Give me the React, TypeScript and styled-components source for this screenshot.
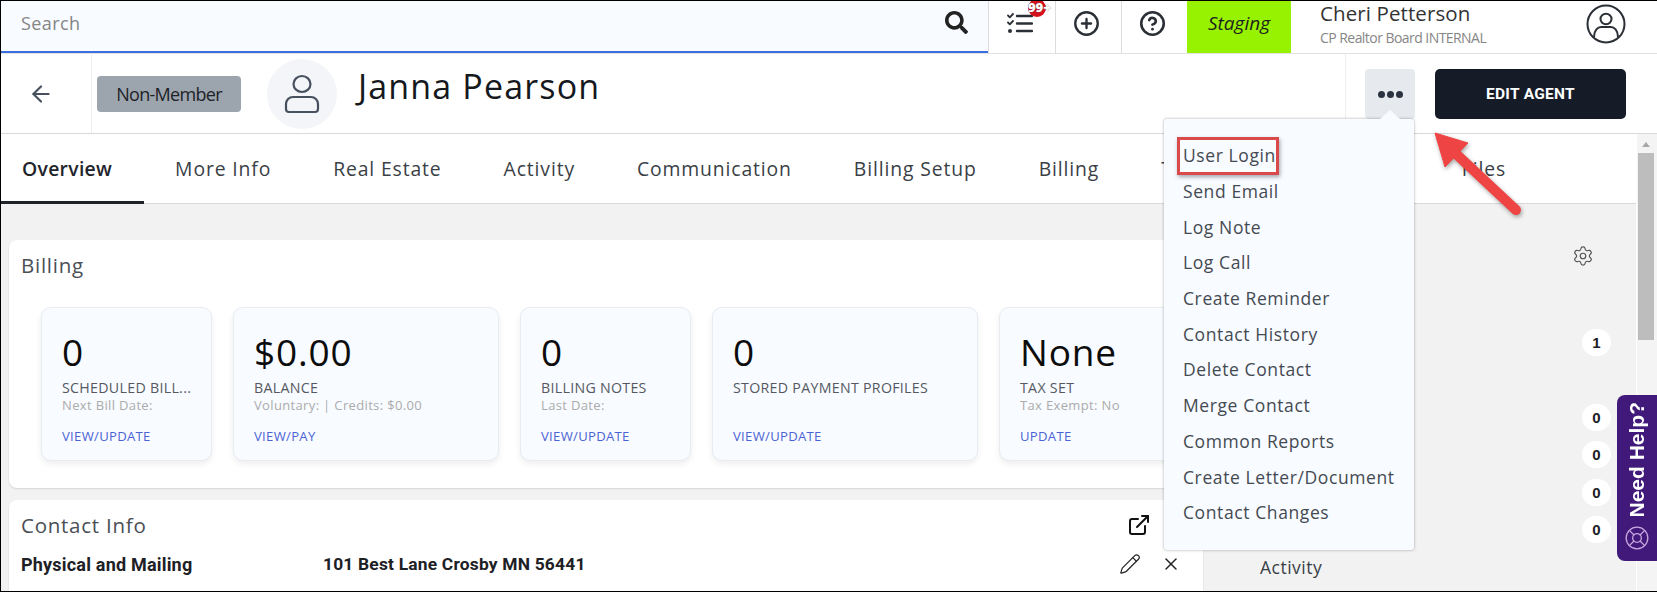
import React from 'react';
import styled, { createGlobalStyle } from 'styled-components';
import { ArrowLeft, CirclePlus, CircleHelp, ExternalLink, Pencil, X, Settings, LifeBuoy } from 'lucide-react';
import { FaSearch } from 'react-icons/fa';

const Global = createGlobalStyle`
  html, body { margin: 0; padding: 0; background: #fff; }
  * { box-sizing: border-box; }
  body { font-family: "Open Sans", "Liberation Sans", sans-serif; }
`;

const Frame = styled.div`
  position: relative;
  width: 1657px;
  height: 592px;
  overflow: hidden;
  border: 1px solid #000;
  border-right: 0;
  display: flex;
  flex-direction: column;
  background: #fff;
`;

const TopBar = styled.div`
  display: flex;
  height: 53px;
  flex: none;
  border-bottom: 1px solid #e2e2e2;
`;

const SearchBox = styled.div`
  width: 987px;
  height: 52px;
  flex: none;
  background: #f8fbff;
  border-bottom: 2px solid #3b6fdf;
  display: flex;
  align-items: center;
  justify-content: space-between;
  padding: 0 20px 7px 20px;
  color: #222;
`;

const SearchHint = styled.span`
  font-size: 18px;
  letter-spacing: 0.4px;
  color: #858585;
`;

const IconCell = styled.div<{ $w?: number }>`
  position: relative;
  width: ${p => p.$w ?? 66}px;
  flex: none;
  display: flex;
  align-items: center;
  justify-content: center;
  padding: 0 4px 7px 0;
  border-left: 1px solid #dcdcdc;
  color: #2b2f36;
`;

const Badge99 = styled.span`
  position: absolute;
  top: -2px;
  left: 39px;
  width: 18px;
  height: 18px;
  border-radius: 50%;
  background: #d4121e;
  color: #fff;
  font-size: 13px;
  font-weight: 800;
  line-height: 16px;
  white-space: nowrap;
  text-shadow: 0 0 1px #555;
`;

const Env = styled.div`
  width: 104px;
  flex: none;
  background: #96f200;
  display: flex;
  align-items: center;
  justify-content: center;
  padding-bottom: 8px;
  font-size: 19px;
  font-style: italic;
  color: #1f1f1f;
`;

const UserBlock = styled.div`
  flex: 1;
  display: flex;
  align-items: center;
  justify-content: space-between;
  padding: 0 31px 7px 29px;
`;

const UserText = styled.div`
  padding-top: 2px;
`;

const UserName = styled.div`
  font-size: 20.5px;
  font-weight: 500;
  line-height: 20px;
  letter-spacing: 0.1px;
  color: #333;
`;

const UserOrg = styled.div`
  font-size: 14px;
  line-height: 18px;
  margin-top: 6px;
  letter-spacing: -0.55px;
  color: #868686;
`;

const Header = styled.div`
  display: flex;
  align-items: stretch;
  height: 80px;
  flex: none;
  border-bottom: 1px solid #d9d9d9;
`;

const BackCell = styled.div`
  width: 91px;
  flex: none;
  display: flex;
  align-items: center;
  justify-content: center;
  padding-right: 11px;
  border-right: 1px solid #eee;
  color: #47505f;
`;

const Pill = styled.div`
  width: 144px;
  height: 36px;
  margin: 22px 0 0 5px;
  border-radius: 4px;
  background: #9ca5ad;
  display: flex;
  align-items: center;
  justify-content: center;
  font-size: 18px;
  letter-spacing: -0.7px;
  color: #1e2228;
`;

const AvatarCircle = styled.div`
  width: 70px;
  height: 70px;
  margin: 5px 0 0 26px;
  border-radius: 50%;
  background: #f3f5f8;
  display: flex;
  align-items: center;
  justify-content: center;
`;

const Name = styled.h1`
  margin: 9px 0 0 21px;
  font-size: 34px;
  font-weight: 400;
  line-height: 46px;
  letter-spacing: 1.15px;
  color: #15181d;
`;

const HeaderActions = styled.div`
  margin-left: auto;
  width: 312px;
  flex: none;
  display: flex;
  gap: 20px;
  padding: 15px 0 0 19px;
  border-left: 1px solid #eee;
`;

const MoreWrap = styled.div`
  position: relative;
  width: 50px;
  height: 50px;
  flex: none;
`;

const MoreButton = styled.div`
  width: 50px;
  height: 50px;
  border-radius: 4px;
  background: #e6e9ee;
  display: flex;
  align-items: center;
  justify-content: center;
  gap: 2px;
`;

const Dot = styled.i`
  width: 7px;
  height: 7px;
  border-radius: 50%;
  background: #2b3240;
`;

const EditButton = styled.div`
  width: 191px;
  height: 50px;
  border-radius: 5px;
  background: #151c28;
  display: flex;
  align-items: center;
  justify-content: center;
  font-family: Roboto, sans-serif;
  font-size: 15.5px;
  font-weight: 700;
  letter-spacing: 0.3px;
  color: #fff;
`;

const Menu = styled.div`
  position: absolute;
  top: 100%;
  right: 1px;
  width: 250px;
  height: 431px;
  z-index: 5;
  padding: 18.5px 0 0 19px;
  background: #f8fbff;
  border-radius: 3px;
  box-shadow: 0 0 3px rgba(0, 0, 0, 0.35);
  &::before {
    content: '';
    position: absolute;
    top: -9px;
    right: 14px;
    border-left: 10px solid transparent;
    border-right: 10px solid transparent;
    border-bottom: 9px solid #f8fbff;
  }
`;

const MenuItem = styled.div`
  position: relative;
  height: 35.7px;
  display: flex;
  align-items: center;
  font-size: 17.5px;
  letter-spacing: 0.6px;
  color: #444a52;
`;

const Callout = styled.span`
  position: absolute;
  left: -6px;
  top: -1px;
  width: 102px;
  height: 38px;
  border: 3px solid #d94a4c;
  box-shadow: 1px 2px 4px rgba(0, 0, 0, 0.35);
`;

const Body = styled.div`
  flex: 1;
  min-height: 0;
  display: flex;
`;

const Main = styled.div`
  width: 1635px;
  flex: none;
  display: flex;
  flex-direction: column;
  min-height: 0;
`;

const Tabs = styled.div`
  height: 70px;
  flex: none;
  display: flex;
  align-items: center;
  border-bottom: 1px solid #d9d9d9;
  background: #fff;
`;

const Tab = styled.div<{ $active?: boolean }>`
  height: 100%;
  display: flex;
  align-items: center;
  padding: 1px 31px 0;
  font-size: 19.35px;
  letter-spacing: 0.87px;
  font-weight: ${p => (p.$active ? 600 : 400)};
  color: ${p => (p.$active ? '#1f242b' : '#3a3f46')};
  border-bottom: 3px solid ${p => (p.$active ? '#1f242b' : 'transparent')};
  margin-bottom: -1px;
  &:first-child {
    padding-left: 21px;
    padding-right: 32px;
    letter-spacing: 0.3px;
  }
`;

const LastTab = styled(Tab)`
  margin-left: auto;
  padding-right: 130px;
`;

const Content = styled.div`
  flex: 1;
  min-height: 0;
  display: flex;
  background: #f2f2f2;
`;

const Left = styled.div`
  width: 1202px;
  flex: none;
  padding: 36px 0 0 8px;
  display: flex;
  flex-direction: column;
  gap: 12px;
`;

const Card = styled.section<{ $h?: number }>`
  flex: none;
  height: ${p => (p.$h ? `${p.$h}px` : 'auto')};
  background: #fff;
  border-radius: 8px;
  box-shadow: 0 1px 2px rgba(0, 0, 0, 0.12);
  padding: 11px 0 0 12px;
`;

const CardTitle = styled.h2`
  margin: 0;
  font-size: 20.5px;
  font-weight: 400;
  line-height: 28px;
  letter-spacing: 0.75px;
  color: #4a4f55;
`;

const StatRow = styled.div`
  display: flex;
  gap: 21px;
  margin: 28px 0 0 20px;
`;

const Stat = styled.div<{ $w: number }>`
  width: ${p => p.$w}px;
  height: 154px;
  flex: none;
  padding: 23px 0 0 20px;
  background: #f8fbff;
  border: 1px solid #e8ebef;
  border-radius: 10px;
  box-shadow: 0 3px 6px rgba(0, 0, 0, 0.07);
`;

const StatValue = styled.div`
  font-size: 37px;
  line-height: 42px;
  letter-spacing: 0.8px;
  color: #0c0c0c;
`;

const StatLabel = styled.div`
  margin-top: 5px;
  font-size: 14.2px;
  line-height: 19px;
  letter-spacing: 0.3px;
  color: #55595f;
`;

const StatSub = styled.div`
  min-height: 16px;
  font-size: 13px;
  line-height: 16px;
  letter-spacing: 0.35px;
  color: #ababab;
`;

const StatLink = styled.div`
  margin-top: 14px;
  font-size: 13.1px;
  line-height: 18px;
  letter-spacing: 0.3px;
  color: #4a63d4;
`;

const ContactHead = styled.div`
  display: flex;
  justify-content: space-between;
  align-items: center;
  padding-right: 52px;
`;

const AddressRow = styled.div`
  display: flex;
  align-items: center;
  height: 30px;
  margin-top: 10px;
  font-family: Roboto, sans-serif;
  font-size: 17.4px;
  font-weight: 700;
  letter-spacing: 0.2px;
  color: #1d2025;
  padding-right: 22px;
`;

const AddressLabel = styled.span`
  width: 302px;
  flex: none;
  font-size: 18px;
`;

const AddressActions = styled.div`
  margin-left: auto;
  display: flex;
  align-items: center;
  gap: 20px;
  color: #222;
`;

const Right = styled.div`
  flex: 1;
  display: flex;
  flex-direction: column;
  align-items: flex-end;
  padding: 41px 25px 0 0;
  color: #555;
`;

const GearWrap = styled.div`
  height: 21px;
  margin-right: 17px;
  display: flex;
  align-items: center;
`;

const CountGroup = styled.div<{ $top: number }>`
  margin-top: ${p => p.$top}px;
  display: flex;
  flex-direction: column;
  gap: 10.4px;
`;

const Count = styled.div`
  width: 29px;
  height: 27px;
  border-radius: 14px;
  background: #fff;
  display: flex;
  align-items: center;
  justify-content: center;
  font-family: "Liberation Sans", sans-serif;
  font-size: 15px;
  font-weight: 700;
  color: #1d2025;
`;

const SideLabel = styled.div`
  align-self: flex-start;
  margin: 13px 0 0 57px;
  font-size: 17.5px;
  line-height: 22px;
  letter-spacing: 0.5px;
  color: #3a3f46;
`;

const ScrollBar = styled.div`
  flex: 1;
  margin-left: 1px;
  padding: 8px 3px 0 1px;
  background: #f4f4f4;
  display: flex;
  flex-direction: column;
  align-items: stretch;
`;

const ScrollUp = styled.div`
  align-self: center;
  width: 0;
  height: 0;
  border-left: 4px solid transparent;
  border-right: 4px solid transparent;
  border-bottom: 5px solid #a8a8a8;
`;

const ScrollThumb = styled.div`
  height: 187px;
  margin-top: 6px;
  background: #bdbdbd;
`;

const HelpTab = styled.div`
  position: absolute;
  right: 0;
  bottom: 30px;
  width: 40px;
  height: 166px;
  z-index: 6;
  padding: 7px 0 10px;
  background: #41197a;
  border-radius: 8px 0 0 8px;
  display: flex;
  flex-direction: column;
  align-items: center;
  justify-content: space-between;
  color: #fff;
`;

const HelpText = styled.span`
  writing-mode: vertical-rl;
  transform: rotate(180deg);
  font-family: "Liberation Sans", sans-serif;
  font-size: 21px;
  font-weight: 700;
  line-height: 26px;
`;

const PointerArrow = styled.svg`
  position: absolute;
  left: 1427px;
  top: 125px;
  z-index: 7;
  filter: drop-shadow(1px 2px 2px rgba(0, 0, 0, 0.35));
`;

const TasksIcon = () => (
  <svg width="26" height="21" viewBox="0 0 26 21" fill="none" stroke="#2b2f36" strokeWidth="2.2" strokeLinecap="round" strokeLinejoin="round">
    <path d="M1 2.5 2.8 4.3 6 1" strokeWidth="1.8" />
    <path d="M1 9.5 2.8 11.3 6 8" strokeWidth="1.8" />
    <circle cx="3" cy="18" r="2" fill="#2b2f36" stroke="none" />
    <path d="M10 3h15M10 10.5h15M10 18h15" strokeWidth="2.4" />
  </svg>
);

const TopAvatar = () => (
  <svg width="40" height="40" viewBox="0 0 40 40" fill="none" stroke="#2b2f36" strokeWidth="2">
    <circle cx="20" cy="20" r="18.5" />
    <ellipse cx="20" cy="15" rx="5.5" ry="5.2" />
    <path d="M8 33c0-7 4-10 7-10h10c3 0 7 3 7 10" />
  </svg>
);

const PersonIcon = () => (
  <svg width="36" height="40" viewBox="0 0 36 40" fill="none" stroke="#47505f" strokeWidth="2.2">
    <ellipse cx="18" cy="10" rx="8.5" ry="8" />
    <path d="M9 23h18a7 7 0 0 1 7 7v5a3 3 0 0 1-3 3H5a3 3 0 0 1-3-3v-5a7 7 0 0 1 7-7z" />
  </svg>
);

const tabs = ['More Info', 'Real Estate', 'Activity', 'Communication', 'Billing Setup', 'Billing', 'T'];
const menu = ['Send Email', 'Log Note', 'Log Call', 'Create Reminder', 'Contact History', 'Delete Contact', 'Merge Contact', 'Common Reports', 'Create Letter/Document', 'Contact Changes'];
const stats = [
  { w: 171, value: '0', label: 'SCHEDULED BILL...', sub: 'Next Bill Date:', link: 'VIEW/UPDATE' },
  { w: 266, value: '$0.00', label: 'BALANCE', sub: 'Voluntary: | Credits: $0.00', link: 'VIEW/PAY' },
  { w: 171, value: '0', label: 'BILLING NOTES', sub: 'Last Date:', link: 'VIEW/UPDATE' },
  { w: 266, value: '0', label: 'STORED PAYMENT PROFILES', sub: '', link: 'VIEW/UPDATE' },
  { w: 180, value: 'None', label: 'TAX SET', sub: 'Tax Exempt: No', link: 'UPDATE' },
];

export default function App() {
  return (
    <>
      <Global />
      <Frame>
        <TopBar>
          <SearchBox>
            <SearchHint>Search</SearchHint>
            <FaSearch size={23} />
          </SearchBox>
          <IconCell $w={67}>
            <TasksIcon />
            <Badge99>99+</Badge99>
          </IconCell>
          <IconCell><CirclePlus size={27} strokeWidth={2.1} /></IconCell>
          <IconCell><CircleHelp size={27} strokeWidth={2.3} /></IconCell>
          <Env>Staging</Env>
          <UserBlock>
            <UserText>
              <UserName>Cheri Petterson</UserName>
              <UserOrg>CP Realtor Board INTERNAL</UserOrg>
            </UserText>
            <TopAvatar />
          </UserBlock>
        </TopBar>
        <Header>
          <BackCell><ArrowLeft size={26} strokeWidth={2} /></BackCell>
          <Pill>Non-Member</Pill>
          <AvatarCircle><PersonIcon /></AvatarCircle>
          <Name>Janna Pearson</Name>
          <HeaderActions>
            <MoreWrap>
              <MoreButton><Dot /><Dot /><Dot /></MoreButton>
              <Menu>
                <MenuItem>User Login<Callout /></MenuItem>
                {menu.map(m => <MenuItem key={m}>{m}</MenuItem>)}
              </Menu>
            </MoreWrap>
            <EditButton>EDIT AGENT</EditButton>
          </HeaderActions>
        </Header>
        <Body>
          <Main>
            <Tabs>
              <Tab $active>Overview</Tab>
              {tabs.map(t => <Tab key={t}>{t}</Tab>)}
              <LastTab>Files</LastTab>
            </Tabs>
            <Content>
              <Left>
                <Card $h={248}>
                  <CardTitle>Billing</CardTitle>
                  <StatRow>
                    {stats.map(s => (
                      <Stat key={s.label} $w={s.w}>
                        <StatValue>{s.value}</StatValue>
                        <StatLabel>{s.label}</StatLabel>
                        <StatSub>{s.sub}</StatSub>
                        <StatLink>{s.link}</StatLink>
                      </Stat>
                    ))}
                  </StatRow>
                </Card>
                <Card $h={120}>
                  <ContactHead>
                    <CardTitle>Contact Info</CardTitle>
                    <ExternalLink size={24} strokeWidth={2} color="#111" />
                  </ContactHead>
                  <AddressRow>
                    <AddressLabel>Physical and Mailing</AddressLabel>
                    <span>101 Best Lane Crosby MN 56441</span>
                    <AddressActions>
                      <Pencil size={22} strokeWidth={1.3} />
                      <X size={20} strokeWidth={1.8} />
                    </AddressActions>
                  </AddressRow>
                </Card>
              </Left>
              <Right>
                <GearWrap><Settings size={22} strokeWidth={1.3} /></GearWrap>
                <CountGroup $top={63}><Count>1</Count></CountGroup>
                <CountGroup $top={48}>
                  <Count>0</Count>
                  <Count>0</Count>
                  <Count>0</Count>
                  <Count>0</Count>
                </CountGroup>
                <SideLabel>Activity</SideLabel>
              </Right>
            </Content>
          </Main>
          <ScrollBar>
            <ScrollUp />
            <ScrollThumb />
          </ScrollBar>
        </Body>
        <HelpTab>
          <HelpText>Need Help?</HelpText>
          <LifeBuoy size={26} strokeWidth={1.2} color="#c9a8df" />
        </HelpTab>
        <PointerArrow width="100" height="97" viewBox="0 0 100 97">
          <path d="M7 7 40 17 17 41Z" fill="#ef4444" stroke="#ef4444" strokeWidth="1" strokeLinejoin="round" />
          <path d="M26 26 88 84" stroke="#ef4444" strokeWidth="10" strokeLinecap="round" />
        </PointerArrow>
      </Frame>
    </>
  );
}
